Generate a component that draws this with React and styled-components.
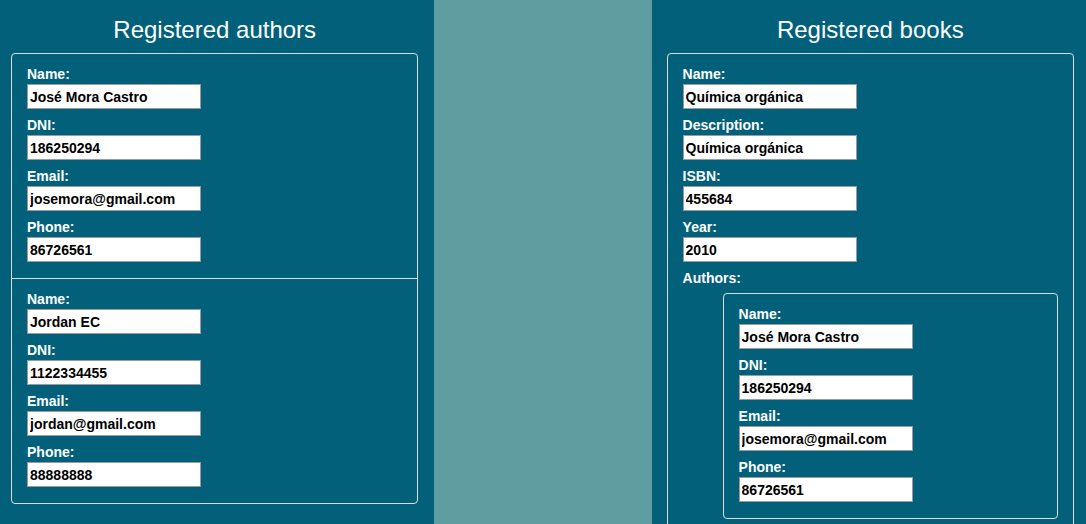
import React from "react";
import styled, { createGlobalStyle } from "styled-components";

const GlobalStyle = createGlobalStyle`
    html, body {
        margin: 0;
        padding: 0;
        background-color: #02607a;
        font-family: "Liberation Sans", Arial, sans-serif;
    }
`;

const Layout = styled.div`
    display: grid;
    grid-template-columns: 40% 20% 40%;
    min-height: 100vh;
`;

const Panel = styled.section`
    background-color: #02607a;
    padding: ${props => (props.side === "right" ? "16px 12px 0 15px" : "16px 16px 0 11px")};
`;

const Spacer = styled.div`
    background-color: #5f9ea0;
`;

const Title = styled.h2`
    margin: 0 0 9px;
    font-size: 24px;
    line-height: 28px;
    font-weight: normal;
    color: white;
    text-align: center;
`;

const Card = styled.ul`
    list-style: none;
    margin: 0;
    padding: 0;
    border: 1px solid #dcdcdc;
    border-radius: 4px;
`;

const Item = styled.li`
    display: flex;
    flex-direction: column;
    gap: 7px;
    padding: 11px 15px 16px;
    & + & {
        border-top: 1px solid #dcdcdc;
    }
`;

const Field = styled.div`
    display: flex;
    flex-direction: column;
`;

const Label = styled.label`
    font-size: 14px;
    line-height: 19px;
    font-weight: bold;
    color: white;
`;

const Input = styled.input`
    box-sizing: border-box;
    width: 174px;
    height: 25px;
    padding: 0 2px;
    border: 1px solid #9a9a9a;
    background: white;
    font-family: "Liberation Sans", Arial, sans-serif;
    font-size: 14px;
    font-weight: bold;
    color: black;
    outline: none;
`;

const AuthorsList = styled(Card)`
    margin: 5px 0 0 40px;
`;

const authors = [
    { name: "José Mora Castro", dni: "186250294", email: "josemora@gmail.com", phone: "86726561" },
    { name: "Jordan EC", dni: "1122334455", email: "jordan@gmail.com", phone: "88888888" }
];

const books = [
    {
        name: "Química orgánica",
        description: "Química orgánica",
        isbn: "455684",
        year: "2010",
        authors: [authors[0]]
    }
];

function TextField({ label, value }) {
    return (
        <Field>
            <Label>{label}</Label>
            <Input type="text" value={value} readOnly />
        </Field>
    );
}

function AuthorItem({ author }) {
    return (
        <Item>
            <TextField label="Name:" value={author.name} />
            <TextField label="DNI:" value={author.dni} />
            <TextField label="Email:" value={author.email} />
            <TextField label="Phone:" value={author.phone} />
        </Item>
    );
}

export default function App() {
    return (
        <>
            <GlobalStyle />
            <Layout>
                <Panel>
                    <Title>Registered authors</Title>
                    <Card>
                        {authors.map((a, i) => (
                            <AuthorItem key={i} author={a} />
                        ))}
                    </Card>
                </Panel>
                <Spacer />
                <Panel side="right">
                    <Title>Registered books</Title>
                    <Card>
                        {books.map((b, i) => (
                            <Item key={i}>
                                <TextField label="Name:" value={b.name} />
                                <TextField label="Description:" value={b.description} />
                                <TextField label="ISBN:" value={b.isbn} />
                                <TextField label="Year:" value={b.year} />
                                <Field>
                                    <Label>Authors:</Label>
                                    <AuthorsList>
                                        {b.authors.map((a, j) => (
                                            <AuthorItem key={j} author={a} />
                                        ))}
                                    </AuthorsList>
                                </Field>
                            </Item>
                        ))}
                    </Card>
                </Panel>
            </Layout>
        </>
    );
}
